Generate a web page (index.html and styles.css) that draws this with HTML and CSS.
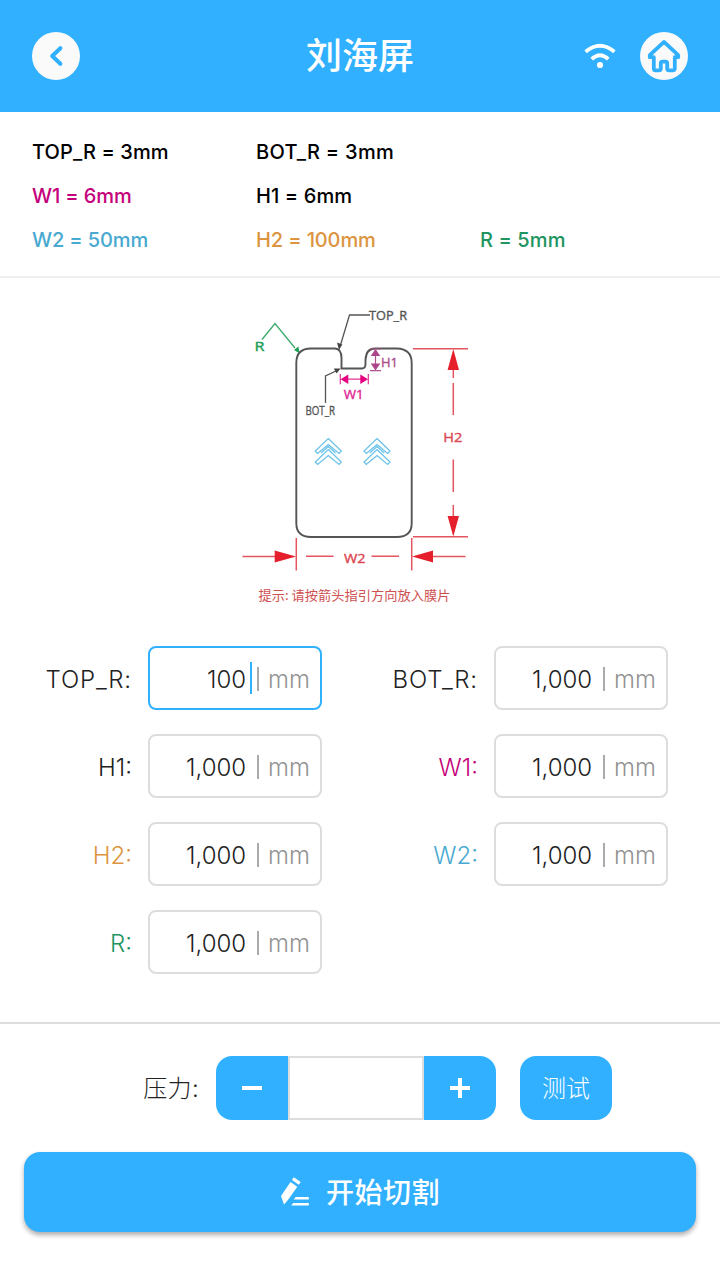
FILE: index.html
```html
<!DOCTYPE html>
<html lang="zh-CN">
<head>
<meta charset="utf-8">
<title>刘海屏</title>
<link rel="stylesheet" href="styles.css">
</head>
<body>
<header class="header">
  <button class="round-btn" aria-label="返回">
    <svg width="48" height="48" viewBox="0 0 48 48"><path d="M28.4 16.2 L20.2 24 L28.4 31.8" class="chevron"/></svg>
  </button>
  <h1 class="title">刘海屏</h1>
  <div class="header-right">
    <svg width="32" height="26" viewBox="584 43 32 26">
      <path d="M585.6 51.8 Q600 39.8 614.4 51.8 M591.7 59.2 Q600 51.2 608.3 59.2" class="wifi"/>
      <circle cx="600" cy="65" r="3.1" fill="#fff"/>
    </svg>
    <button class="round-btn" aria-label="首页">
      <svg width="48" height="48" viewBox="640 32 48 48"><path class="house" d="M664 41.9 L649.8 55.2 V57.2 H653.8 V68.6 Q653.8 70.3 655.5 70.3 H659 Q660.8 70.3 660.8 68.6 V63.4 Q660.8 61.7 662.5 61.7 H665.5 Q667.2 61.7 667.2 63.4 V68.6 Q667.2 70.3 669 70.3 H672.5 Q674.8 70.3 674.8 68.6 V57.2 H678.2 V55.2 Z"/></svg>
    </button>
  </div>
</header>

<section class="summary">
  <span>TOP_R = 3mm</span><span class="bot">BOT_R = 3mm</span><span></span>
  <span class="magenta tight">W1 = 6mm</span><span>H1 = 6mm</span><span></span>
  <span class="blue tight">W2 = 50mm</span><span class="orange tight">H2 = 100mm</span><span class="green">R = 5mm</span>
</section>

<main>
  <figure class="diagram">
    <svg width="250" height="310" viewBox="230 300 250 310">
      <path class="outline" d="M309 348.5 H335 Q341.5 349 341.5 358 V368.5 H362 Q365.5 368.5 365.5 364 V360 Q366 348.5 375 348.5 H397 Q411.7 349 411.7 363 V523 Q411.7 537 397 537 H311 Q296.3 537 296.3 523 V363 Q296.3 348.5 311 348.5"/>
      <g class="leader">
        <path d="M370 315 H349.5 L340.5 345"/>
        <path d="M325.5 403 V376 L337 370.5"/>
      </g>
      <path d="M337 342.6 L342.3 344.4 L339 350z M333.8 368.6 L340.5 368.4 L336.6 373.4z" fill="#444"/>
      <path d="M262 339.5 L275 323.5 L295 348" fill="none" stroke="#3aa968" stroke-width="1.3"/>
      <path d="M294 350 L298.4 346.4 L299.4 353.2z" fill="#1c9f52"/>

      <g stroke="#b0528e" stroke-width="1.2"><path d="M370 349 H381 M370 370.7 H381 M375.5 353 V367"/></g>
      <path d="M375.5 349 L380.3 356 H370.7z M375.5 370.5 L380.3 363.5 H370.7z" fill="#ac468a"/>
      <path d="M340.3 374 V384.3 M368.3 374 V384.3 M345 379.2 H364" stroke="#e3359a" stroke-width="1.2"/>
      <path d="M340.6 379.2 L348.3 374.4 V384z M368 379.2 L360.3 374.4 V384z" fill="#e5007f"/>

      <g class="dim">
        <path d="M413 348.8 H468 M413 536.7 H468"/>
        <path d="M453.3 367 V378 M453.3 383 V415 M453.3 459.5 V492 M453.3 505 V517"/>
        <path d="M296.3 538 V570.5 M411.7 538 V570.5"/>
        <path d="M242.5 556.5 H277 M306 556.3 H333.5 M371.5 556.3 H399 M431 556.5 H465.5"/>
      </g>
      <path d="M453.3 349 L459 370 H447.6z M453.3 536.5 L459 516 H447.6z M296 556.5 L274.7 550.5 V562.5z M412 556.5 L433 550.5 V562.5z" fill="#e5202c"/>

      <g class="guide">
        <path id="chevron-up" d="M328.3 438.5 L341.3 451 L339 453.5 L328.3 444.5 L317.6 453.5 L315.3 451z"/>
        <use href="#chevron-up" y="11"/>
        <path d="M328.3 446.5 L335.5 453 M328.3 446.5 L321 453"/>
        <use href="#chevron-up" x="48.7"/>
        <use href="#chevron-up" x="48.7" y="11"/>
        <path d="M377 446.5 L384.2 453 M377 446.5 L369.7 453"/>
      </g>

      <g class="labels">
        <text x="369" y="319.5" textLength="38" lengthAdjust="spacingAndGlyphs" fill="#555" stroke="#555">TOP_R</text>
        <text x="305.5" y="414.5" textLength="29.5" lengthAdjust="spacingAndGlyphs" fill="#555" stroke="#555">BOT_R</text>
        <text x="254.5" y="351" textLength="10" lengthAdjust="spacingAndGlyphs" fill="#209e57" stroke="#209e57">R</text>
        <text x="381" y="366.5" textLength="17" lengthAdjust="spacingAndGlyphs" fill="#ad4f8c" stroke="#ad4f8c">H1</text>
        <text x="343.7" y="399" textLength="20" lengthAdjust="spacingAndGlyphs" fill="#e32794" stroke="#e32794">W1</text>
        <text x="443.3" y="442" textLength="19" lengthAdjust="spacingAndGlyphs" fill="#dc4650" stroke="#dc4650">H2</text>
        <text x="344" y="563.3" textLength="21.5" lengthAdjust="spacingAndGlyphs" fill="#dc4650" stroke="#dc4650">W2</text>
      </g>
      <text class="hint" x="258.5" y="600" textLength="192" lengthAdjust="spacingAndGlyphs">提示: 请按箭头指引方向放入膜片</text>
    </svg>
  </figure>

  <form class="form">
    <label class="row"><span class="name wide">TOP_R:</span><span class="field active"><span class="value">100</span><i class="caret"></i><i class="bar"></i><span class="unit">mm</span></span></label>
    <label class="row"><span class="name wide">BOT_R:</span><span class="field"><span class="value">1,000</span><i class="bar"></i><span class="unit">mm</span></span></label>
    <label class="row"><span class="name">H1:</span><span class="field"><span class="value">1,000</span><i class="bar"></i><span class="unit">mm</span></span></label>
    <label class="row"><span class="name magenta">W1:</span><span class="field"><span class="value">1,000</span><i class="bar"></i><span class="unit">mm</span></span></label>
    <label class="row"><span class="name orange">H2:</span><span class="field"><span class="value">1,000</span><i class="bar"></i><span class="unit">mm</span></span></label>
    <label class="row"><span class="name blue">W2:</span><span class="field"><span class="value">1,000</span><i class="bar"></i><span class="unit">mm</span></span></label>
    <label class="row"><span class="name green">R:</span><span class="field"><span class="value">1,000</span><i class="bar"></i><span class="unit">mm</span></span></label>
  </form>
</main>

<footer class="footer">
  <div class="pressure">
    <span class="pressure-label">压力:</span>
    <div class="stepper">
      <button class="step minus" aria-label="减"><svg width="20" height="20"><path d="M0 10 H20" stroke="#fff" stroke-width="4"/></svg></button>
      <div class="step-value"></div>
      <button class="step plus" aria-label="加"><svg width="20" height="20"><path d="M0 10 H20 M10 0 V20" stroke="#fff" stroke-width="4"/></svg></button>
    </div>
    <button class="test">测试</button>
  </div>
  <button class="start">
    <svg width="30" height="30" viewBox="280 1177 30 30" fill="#fff">
      <path d="M293.8 1177.2 L300.7 1182 L298.8 1184.8 L291.9 1180z"/>
      <path d="M290.5 1182 L297.3 1186.8 L288.3 1199.6 L284 1204.6 L281 1196z"/>
      <path d="M295.6 1197 H308.8 V1199.6 H293.8z M293.2 1203 H308.8 V1205.6 H291.2z"/>
    </svg>
    <span class="start-text">开始切割</span>
  </button>
</footer>
</body>
</html>
```

FILE: styles.css
```css
* { box-sizing: border-box; }
body {
  margin: 0;
  width: 720px;
  height: 1280px;
  overflow: hidden;
  background: #fff;
  color: #222;
  font-family: Inter, "Noto Sans CJK SC", sans-serif;
}
button {
  border: 0;
  padding: 0;
  margin: 0;
  background: #31b0ff;
  color: #fff;
  font-family: inherit;
}
svg { display: block; }

.header {
  display: grid;
  grid-template-columns: 1fr auto 1fr;
  align-items: center;
  height: 112px;
  padding: 0 32px;
  background: #31b0ff;
}
.title {
  margin: 0;
  color: #fff;
  font-size: 36px;
  font-weight: 500;
  line-height: 52px;
}
.header-right { display: flex; align-items: center; justify-content: flex-end; gap: 24px; }
.round-btn { width: 48px; height: 48px; border-radius: 50%; background: #fafafa; }
.chevron { fill: none; stroke: #31b0ff; stroke-width: 4; stroke-linecap: round; stroke-linejoin: round; }
.wifi { fill: none; stroke: #fff; stroke-width: 3.8; }
.house { fill: none; stroke: #31b0ff; stroke-width: 3.8; stroke-linejoin: round; }

.summary {
  display: grid;
  grid-template-columns: repeat(3, 224px);
  grid-auto-rows: 44px;
  align-items: center;
  height: 166px;
  padding: 18px 0 0 32px;
  border-bottom: 2px solid #eee;
  color: #000;
  font-size: 20px;
  font-weight: 500;
  letter-spacing: .1px;
}
.tight { letter-spacing: -.12px; }
.bot { letter-spacing: .3px; }
.magenta { color: #c4007a; }
.blue { color: #49a9d0; }
.orange { color: #dc9440; }
.green { color: #209460; }

.diagram { display: flex; margin: 22px 0 0 230px; }
.outline { fill: none; stroke: #555; stroke-width: 1.9; }
.leader { fill: none; stroke: #555; stroke-width: 1.3; }
.dim { fill: none; stroke: #e45560; stroke-width: 1.5; }
.guide { fill: none; stroke: #66c0e8; stroke-width: 1.2; }
.labels { font-family: "Open Sans", sans-serif; font-size: 12.5px; stroke-width: .35px; }
.hint { font-family: "Noto Sans CJK SC", sans-serif; font-size: 13px; fill: #cf5050; }

.form {
  display: grid;
  grid-template-columns: 322px 322px;
  gap: 24px;
  padding: 36px 0 48px;
}
.row { display: flex; align-items: center; height: 64px; }
.name {
  width: 132px;
  margin-right: 16px;
  padding-top: 3px;
  text-align: right;
  font-size: 24px;
  font-weight: 300;
}
.wide { letter-spacing: .85px; }
.field {
  display: flex;
  align-items: center;
  justify-content: flex-end;
  position: relative;
  width: 174px;
  height: 64px;
  padding: 2px 10px 0 0;
  border: 2px solid #ddd;
  border-radius: 8px;
  font-size: 24px;
}
.active { border-color: #31b0ff; }
.value { font-weight: 300; }
.bar { width: 2px; height: 24px; margin: 0 9px 0 11px; background: #aaa; }
.unit { color: #929292; font-weight: 300; }
.caret { position: absolute; left: 100px; top: 14px; width: 2px; height: 32px; background: #31b0ff; }

.footer { border-top: 2px solid #ddd; padding: 32px 24px 0; }
.pressure { display: flex; align-items: center; height: 64px; padding-left: 118px; }
.pressure-label {
  width: 57px;
  margin-right: 17px;
  padding-bottom: 4px;
  font-size: 24px;
  font-weight: 300;
  letter-spacing: .3px;
  white-space: nowrap;
  text-align: right;
}
.stepper { display: flex; height: 64px; }
.step { display: flex; align-items: center; justify-content: center; width: 72px; height: 64px; }
.minus { border-radius: 16px 0 0 16px; }
.plus { border-radius: 0 16px 16px 0; }
.step-value { width: 136px; border: 2px solid #ddd; }
.test { width: 92px; height: 64px; margin-left: 24px; padding-bottom: 4px; border-radius: 16px; font-size: 24px; font-weight: 300; }
.start {
  display: flex;
  align-items: center;
  justify-content: center;
  gap: 16px;
  width: 672px;
  height: 80px;
  margin-top: 32px;
  border-radius: 16px;
  font-size: 28px;
  font-weight: 500;
  box-shadow: 0 3px 5px rgba(0, 0, 0, .33);
}
.start-text { padding-bottom: 2px; letter-spacing: .5px; }
```
